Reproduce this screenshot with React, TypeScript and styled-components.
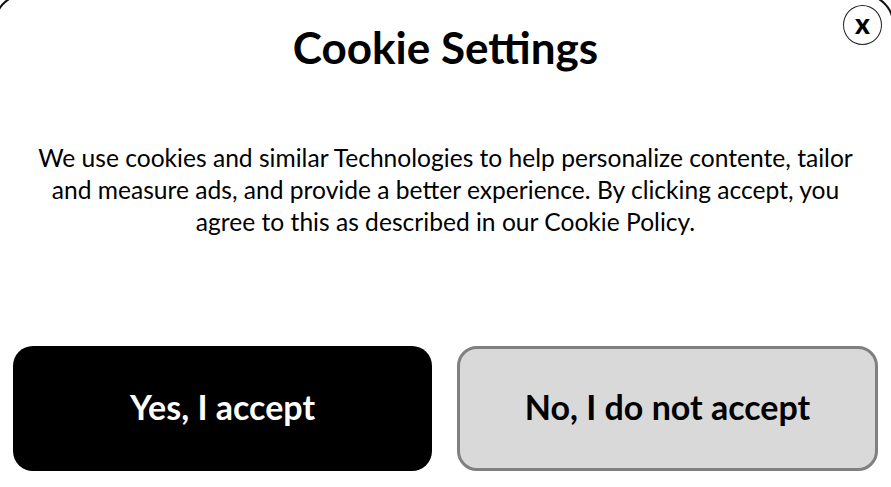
import React from "react";
import styled, { createGlobalStyle } from "styled-components";

const Global = createGlobalStyle`
  html, body { margin: 0; padding: 0; background: #fff; overflow: hidden; }
  body { font-family: Lato, "Open Sans", sans-serif; }
`;

const Dialog = styled.div`
  position: relative;
  overflow: hidden;
  width: 891px;
  height: 487px;
  box-sizing: border-box;
  display: flex;
  flex-direction: column;
  align-items: center;
  padding: 20px 13px 16px;
`;

const Frame = styled.div`
  position: absolute;
  left: -6px;
  top: -6px;
  right: -3px;
  bottom: -40px;
  border: 2px solid #111;
  border-radius: 30px;
  pointer-events: none;
`;

const CloseButton = styled.button`
  position: absolute;
  top: 5px;
  right: 9px;
  width: 39px;
  height: 40px;
  border-radius: 50%;
  border: 1px solid #222;
  background: #fff;
  font-family: Lato, sans-serif;
  font-weight: 900;
  font-size: 28px;
  line-height: 1;
  padding: 0 0 5px;
  color: #000;
`;

const Title = styled.h1`
  margin: 0;
  font-size: 44px;
  font-weight: 700;
  line-height: 54px;
  color: #000;
`;

const Body = styled.p`
  margin: 68px 0 0;
  width: 828px;
  text-align: center;
  font-size: 24.6px;
  line-height: 32px;
  color: #000;
`;

const Actions = styled.div`
  margin-top: auto;
  width: 100%;
  display: grid;
  grid-template-columns: 419px 421px;
  justify-content: space-between;
`;

const Action = styled.button<{ $primary?: boolean }>`
  height: 125px;
  box-sizing: border-box;
  border-radius: 20px;
  font-family: Lato, sans-serif;
  font-weight: 700;
  font-size: 34px;
  padding: 0 0 4px;
  background: ${(p) => (p.$primary ? "#000" : "#d9d9d9")};
  color: ${(p) => (p.$primary ? "#fff" : "#000")};
  border: ${(p) => (p.$primary ? "none" : "3px solid #808080")};
`;

export default function App() {
  return (
    <>
      <Global />
      <Dialog>
        <Frame />
        <CloseButton>x</CloseButton>
        <Title>Cookie Settings</Title>
        <Body>
          We use cookies and similar Technologies to help personalize contente, tailor and
          measure ads, and provide a better experience. By clicking accept, you agree to this
          as described in our Cookie Policy.
        </Body>
        <Actions>
          <Action $primary>Yes, I accept</Action>
          <Action>No, I do not accept</Action>
        </Actions>
      </Dialog>
    </>
  );
}
